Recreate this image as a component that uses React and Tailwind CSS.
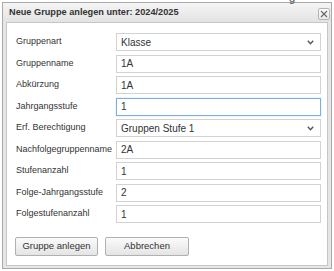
export default function App() {
  const rows = [
    { label: 'Gruppenart', value: 'Klasse', select: true },
    { label: 'Gruppenname', value: '1A' },
    { label: 'Abkürzung', value: '1A' },
    { label: 'Jahrgangsstufe', value: '1', focus: true },
    { label: 'Erf. Berechtigung', value: 'Gruppen Stufe 1', select: true },
    { label: 'Nachfolgegruppenname', value: '2A' },
    { label: 'Stufenanzahl', value: '1' },
    { label: 'Folge-Jahrgangsstufe', value: '2' },
    { label: 'Folgestufenanzahl', value: '1' },
  ];
  return (
    <div className="relative w-[334px] h-[271px] overflow-hidden bg-white pt-[2px] pl-[2px] font-['Liberation_Sans',Arial,sans-serif] text-[#333]">
      <span className="absolute left-[289px] top-[-10px] text-[11px] text-[#555]">g</span>
      <div className="w-[330px] h-[267px] border border-[#a9a9a9] bg-[#e6e6e6] flex flex-col">
        <div className="h-[19px] shrink-0 flex items-center justify-between pl-[6px] pr-[1px] bg-gradient-to-b from-[#f5f5f5] to-[#e3e3e3]">
          <span className="text-[9.2px] font-bold text-[#333] leading-none pt-[1px]">Neue Gruppe anlegen unter: 2024/2025</span>
          <div className="w-[12px] h-[12px] mt-[2px] border border-[#b5b5b5] rounded-[2px] bg-gradient-to-b from-[#fbfbfb] to-[#e9e9e9] flex items-center justify-center">
            <svg width="8" height="8" viewBox="0 0 8 8">
              <path d="M1 1 L7 7 M7 1 L1 7" stroke="#666" strokeWidth="1.1" fill="none" />
            </svg>
          </div>
        </div>
        <div className="mx-[3px] mb-[2px] flex-1 border border-[#c6c6c6] bg-white pl-[7px] pt-[10px]">
          <div className="flex flex-col gap-[3.5px]">
            {rows.map((r) => (
              <div key={r.label} className="flex items-center h-[18px]">
                <div className="w-[102px] shrink-0 pl-[2px] text-[9px] text-[#333]">{r.label}</div>
                <div
                  className={
                    'w-[205px] h-[18px] flex items-center justify-between pl-[4px] pr-[6px] text-[10px] text-[#333] bg-white border ' +
                    (r.focus ? 'border-[#79b0e8] shadow-[0_0_1px_#9cc7f0]' : 'border-[#d2d2d2]')
                  }
                >
                  <span>{r.value}</span>
                  {r.select && (
                    <svg width="7" height="5" viewBox="0 0 7 5">
                      <path d="M0.8 0.8 L3.5 3.7 L6.2 0.8" stroke="#555" strokeWidth="1.4" fill="none" />
                    </svg>
                  )}
                </div>
              </div>
            ))}
          </div>
          <div className="flex gap-[7px] mt-[14px] pl-[1px]">
            <div className="w-[83px] h-[19px] flex items-center justify-center border border-[#b0b0b0] rounded-[2px] bg-gradient-to-b from-[#fbfbfb] to-[#e4e4e4] text-[9.5px] text-[#333]">
              Gruppe anlegen
            </div>
            <div className="w-[84px] h-[19px] flex items-center justify-center border border-[#b0b0b0] rounded-[2px] bg-gradient-to-b from-[#fbfbfb] to-[#e4e4e4] text-[9.5px] text-[#333]">
              Abbrechen
            </div>
          </div>
        </div>
      </div>
    </div>
  );
}
